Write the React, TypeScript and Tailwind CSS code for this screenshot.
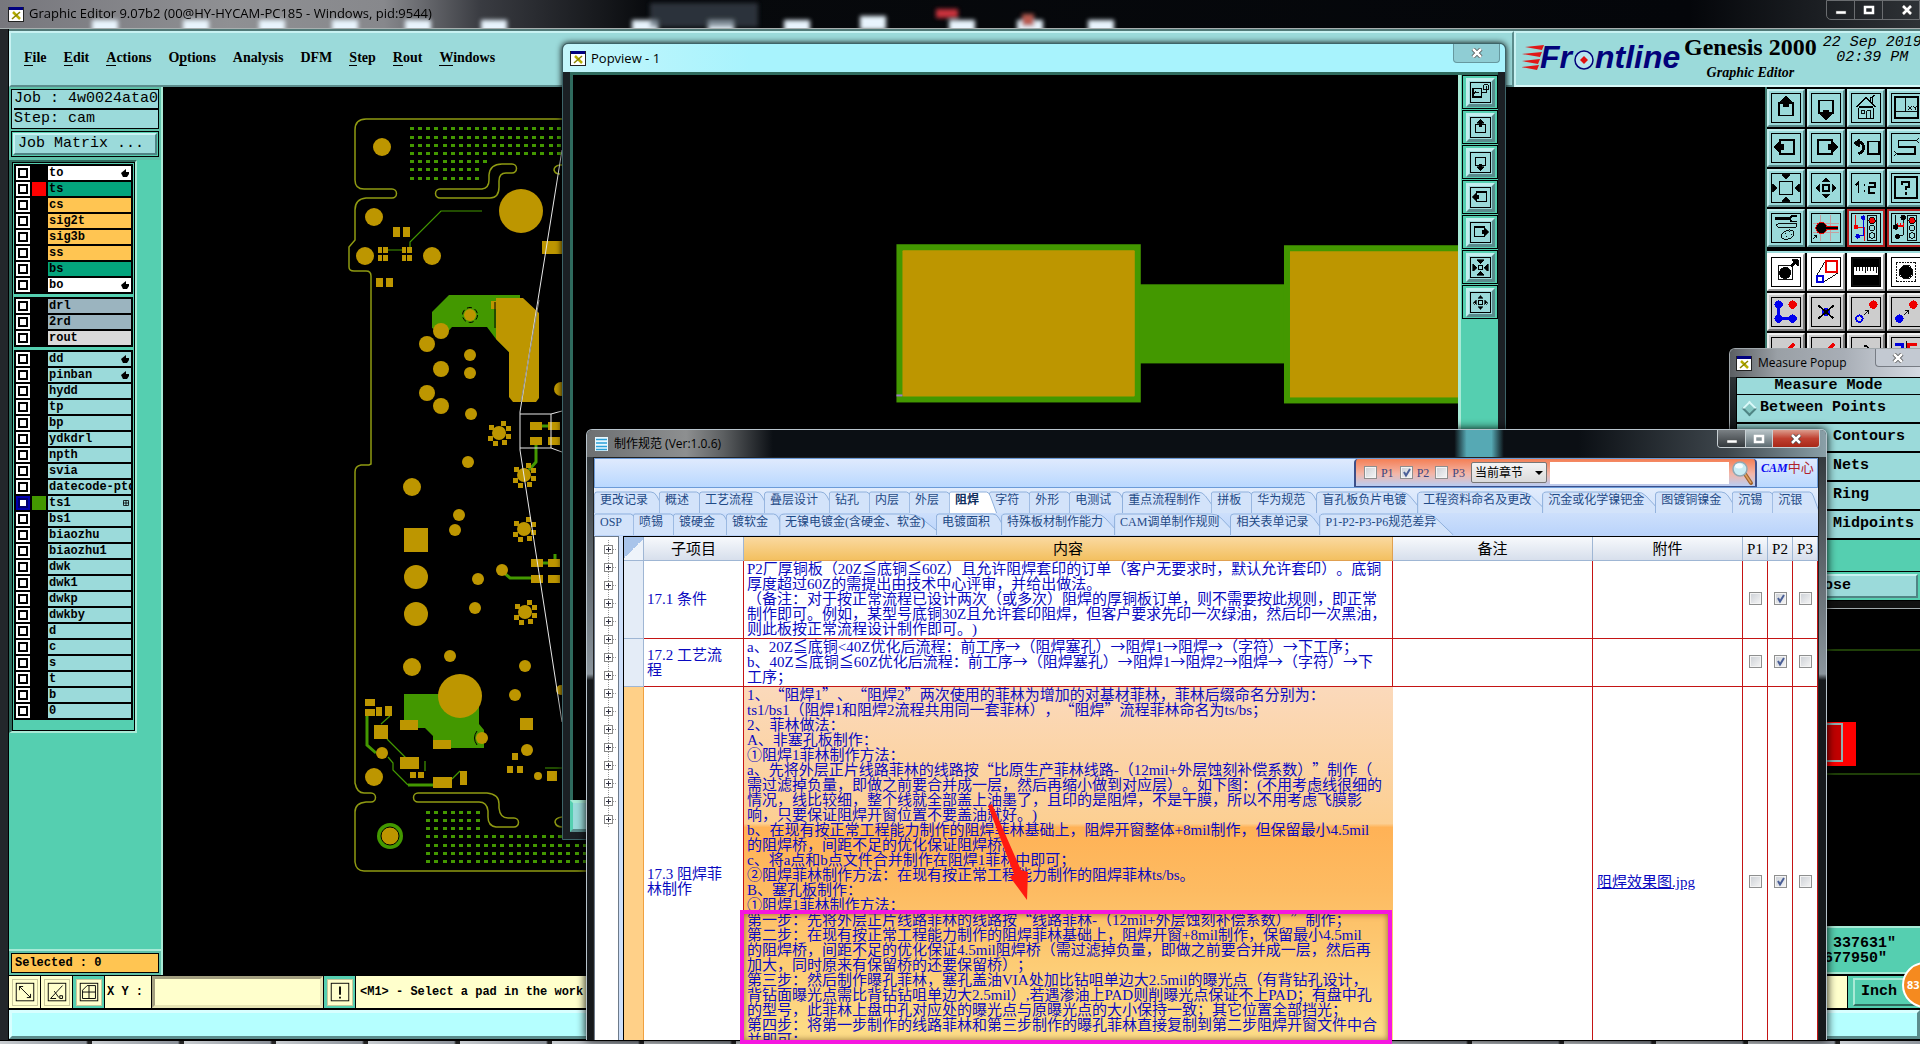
import type { ReactNode } from 'react';
import clsx from 'clsx';

type Layer = { name: string; bg: string; mark?: 'hand' | 'grid'; swatch?: string; active?: boolean };

const CYAN = 'bg-[#9bdada]';
const layer = (name: string, extra: Partial<Layer> = {}): Layer => ({ name, bg: CYAN, ...extra });

const layerGroups: Layer[][] = [
  [
    { name: 'to', bg: 'bg-white', mark: 'hand' },
    { name: 'ts', bg: 'bg-[#04a47d]', swatch: 'bg-[#ff0000]' },
    { name: 'cs', bg: 'bg-[#ffc552]' },
    { name: 'sig2t', bg: 'bg-[#ffc552]' },
    { name: 'sig3b', bg: 'bg-[#ffc552]' },
    { name: 'ss', bg: 'bg-[#ffc552]' },
    { name: 'bs', bg: 'bg-[#04a47d]' },
    { name: 'bo', bg: 'bg-white', mark: 'hand' },
  ],
  [
    { name: 'drl', bg: 'bg-[#9bb4bf]' },
    { name: '2rd', bg: 'bg-[#9bb4bf]' },
    { name: 'rout', bg: 'bg-[#dadada]' },
  ],
  [
    layer('dd', { mark: 'hand' }),
    layer('pinban', { mark: 'hand' }),
    layer('hydd'),
    layer('tp'),
    layer('bp'),
    layer('ydkdrl'),
    layer('npth'),
    layer('svia'),
    layer('datecode-ptd'),
    layer('ts1', { mark: 'grid', swatch: 'bg-[#439800]', active: true }),
    layer('bs1'),
    layer('biaozhu'),
    layer('biaozhu1'),
    layer('dwk'),
    layer('dwk1'),
    layer('dwkp'),
    layer('dwkby'),
    layer('d'),
    layer('c'),
    layer('s'),
    layer('t'),
    layer('b'),
    layer('0'),
  ],
];

// text before the mnemonic, the mnemonic itself, text after it
const menus = [
  ['', 'F', 'ile'],
  ['', 'E', 'dit'],
  ['', 'A', 'ctions'],
  ['O', 'p', 'tions'],
  ['Analysis', '', ''],
  ['DFM', '', ''],
  ['', 'S', 'tep'],
  ['', 'R', 'out'],
  ['', 'W', 'indows'],
];

const tabRows = [
  ['更改记录', '概述', '工艺流程', '叠层设计', '钻孔', '内层', '外层', '阻焊', '字符', '外形', '电测试', '重点流程制作', '拼板', '华为规范', '盲孔板负片电镀', '工程资料命名及更改', '沉金或化学镍钯金', '图镀铜镍金', '沉锡', '沉银'],
  ['OSP', '喷锡', '镀硬金', '镀软金', '无镍电镀金(含硬金、软金)', '电镀面积', '特殊板材制作能力', 'CAM调单制作规则', '相关表单记录', 'P1-P2-P3-P6规范差异'],
];

const specs = [
  {
    item: ['17.1 条件'],
    height: 'h-[78px]',
    lines: [
      'P2厂厚铜板（20Z≦底铜≦60Z）且允许阻焊套印的订单（客户无要求时，默认允许套印）。底铜',
      '厚度超过60Z的需提出由技术中心评审，并给出做法。',
      '（备注：对于按正常流程已设计两次（或多次）阻焊的厚铜板订单，则不需要按此规则，即正常',
      '制作即可。例如，某型号底铜30Z且允许套印阻焊，但客户要求先印一次绿油，然后印一次黑油，',
      '则此板按正常流程设计制作即可。)',
    ],
  },
  {
    item: ['17.2 工艺流', '程'],
    height: 'h-[48px]',
    lines: [
      'a、20Z≦底铜<40Z优化后流程：前工序→（阻焊塞孔）→阻焊1→阻焊→（字符）→下工序；',
      'b、40Z≦底铜≦60Z优化后流程：前工序→（阻焊塞孔）→阻焊1→阻焊2→阻焊→（字符）→下',
      '工序；',
    ],
  },
  {
    item: ['17.3 阻焊菲', '林制作'],
    height: 'h-[391px]',
    selected: true,
    file: '阻焊效果图.jpg',
    lines: [
      '1、“阻焊1”、“阻焊2”两次使用的菲林为增加的对基材菲林，菲林后缀命名分别为：',
      'ts1/bs1（阻焊1和阻焊2流程共用同一套菲林），“阻焊”流程菲林命名为ts/bs；',
      '2、菲林做法：',
      'A、非塞孔板制作：',
      '①阻焊1菲林制作方法：',
      'a、先将外层正片线路菲林的线路按“比原生产菲林线路-（12mil+外层蚀刻补偿系数）”制作（',
      '需过滤掉负量，即做之前要合并成一层，然后再缩小做到对应层）。如下图：(不用考虑线很细的',
      '情况，线比较细，整个线就全部盖上油墨了，且印的是阻焊，不是干膜，所以不用考虑飞膜影',
      '响，只要保证阻焊开窗位置不要盖油就好。)',
      'b、在现有按正常工程能力制作的阻焊菲林基础上，阻焊开窗整体+8mil制作，但保留最小4.5mil',
      '的阻焊桥，间距不足的优化保证阻焊桥。',
      'c、将a点和b点文件合并制作在阻焊1菲林中即可；',
      '②阻焊菲林制作方法：在现有按正常工程能力制作的阻焊菲林ts/bs。',
      'B、塞孔板制作：',
      '①阻焊1菲林制作方法：',
      '第一步：先将外层正片线路菲林的线路按“线路菲林-（12mil+外层蚀刻补偿系数）”制作；',
      '第二步：在现有按正常工程能力制作的阻焊菲林基础上，阻焊开窗+8mil制作，保留最小4.5mil',
      '的阻焊桥，间距不足的优化保证4.5mil阻焊桥（需过滤掉负量，即做之前要合并成一层，然后再',
      '加大，同时原来有保留桥的还要保留桥）；',
      '第三步：然后制作曝孔菲林，塞孔盖油VIA处加比钻咀单边大2.5mil的曝光点（有背钻孔设计，',
      '背钻面曝光点需比背钻钻咀单边大2.5mil）,若遇渗油上PAD则削曝光点保证不上PAD；有盘中孔',
      '的型号，此菲林上盘中孔对应处的曝光点与原曝光点的大小保持一致；其它位置全部挡光；',
      '第四步：将第一步制作的线路菲林和第三步制作的曝孔菲林直接复制到第二步阻焊开窗文件中合',
      '并即可；',
    ],
  },
];

const SONG = "font-['Liberation_Serif','Noto_Sans_CJK_SC',serif]";
const HEI = "font-['Noto_Sans_CJK_SC',sans-serif]";
const UI = "font-['Open_Sans','Noto_Sans_CJK_SC',sans-serif]";
const MONO = "font-['Liberation_Mono',monospace]";

/* ---------- icons ---------- */

const Tri = ({ x, y, dir, s = 4 }: { x: number; y: number; dir: 'u' | 'd' | 'l' | 'r'; s?: number }) => {
  const pts = {
    u: `${x - s},${y + s} ${x + s},${y + s} ${x},${y}`,
    d: `${x - s},${y - s} ${x + s},${y - s} ${x},${y}`,
    l: `${x + s},${y - s} ${x + s},${y + s} ${x},${y}`,
    r: `${x - s},${y - s} ${x - s},${y + s} ${x},${y}`,
  };
  return <polygon points={pts[dir]} fill="#000" />;
};

const icons: Record<string, ReactNode> = {
  up: (
    <>
      <rect x="7.5" y="10" width="15" height="13" strokeWidth="2" />
      <rect x="12" y="6" width="6" height="8" fill="#000" stroke="none" />
      <Tri x={15} y={2} dir="u" s={6} />
    </>
  ),
  down: (
    <>
      <rect x="7.5" y="7" width="15" height="13" strokeWidth="2" />
      <rect x="12" y="17" width="6" height="7" fill="#000" stroke="none" />
      <Tri x={15} y={28} dir="d" s={6} />
    </>
  ),
  left: (
    <>
      <rect x="9" y="6.500" width="15" height="15" strokeWidth="2" />
      <rect x="6" y="11" width="7" height="6" fill="#000" stroke="none" />
      <Tri x={2} y={14} dir="l" s={6} />
    </>
  ),
  right: (
    <>
      <rect x="6" y="6.500" width="15" height="15" strokeWidth="2" />
      <rect x="17" y="11" width="7" height="6" fill="#000" stroke="none" />
      <Tri x={28} y={14} dir="r" s={6} />
    </>
  ),
  home: (
    <>
      <path d="M5 14L15 4L25 14M7 14H23M7 15V26H23V15M20 9V4H22V11M22 3L24 1" strokeWidth="1.500" />
      <rect x="10" y="18" width="3" height="3" />
      <path d="M16 26V18H20V26" />
    </>
  ),
  xy: (
    <>
      <rect x="3" y="3" width="25" height="23" strokeWidth="2" />
      <path d="M14 3V19M3 19H28M17 13l4 4M21 13l-4 4M23 13l2 2l2-2M25 15v2" />
    </>
  ),
  undo: (
    <>
      <rect x="17" y="8" width="12" height="13" strokeWidth="2" />
      <path d="M8 9C14 9 14 20 7 21" strokeWidth="3" />
      <polygon points="2,10 8,5 8,14" fill="#000" />
    </>
  ),
  snake: (
    <>
      <path d="M27 7H7V14H25V21H5" strokeWidth="2" />
      <path d="M26 7l3-3M26 7l3 3M5 21l-3-3M5 21l-3 3" />
    </>
  ),
  fit: (
    <>
      <rect x="8" y="8" width="14" height="14" strokeWidth="2" />
      <Tri x={15} y={5} dir="d" />
      <Tri x={15} y={25} dir="u" />
      <Tri x={5} y={15} dir="r" />
      <Tri x={25} y={15} dir="l" />
    </>
  ),
  squeeze: (
    <>
      <rect x="12" y="12" width="6" height="6" strokeWidth="2" />
      <Tri x={15} y={9} dir="d" s={6} />
      <Tri x={15} y={21} dir="u" s={6} />
      <Tri x={9} y={15} dir="r" s={6} />
      <Tri x={21} y={15} dir="l" s={6} />
    </>
  ),
  zoomOut: (
    <>
      <rect x="11.500" y="11.500" width="7" height="7" strokeWidth="2" />
      <Tri x={15} y={4} dir="u" />
      <Tri x={15} y={26} dir="d" />
      <Tri x={4} y={15} dir="l" />
      <Tri x={26} y={15} dir="r" />
    </>
  ),
  ratio: <path d="M4 12L7 9V20M13 12h1M13 18h1M18 10H25V14H18V20H25" strokeWidth="2" />,
  help: (
    <>
      <rect x="3" y="3" width="24" height="23" strokeWidth="2" />
      <path d="M11 12V9H18V14H15V17M15 19v3" strokeWidth="2" />
    </>
  ),
  tools: (
    <>
      <path d="M3 5H19" strokeWidth="3" />
      <path d="M27 2H21L19 5L21 8H27" strokeWidth="2" />
      <path d="M4 12L7 10H26V14H7Z" />
      <path d="M12 20C16 16 24 16 23 21C23 26 16 28 13 27C9 26 9 22 12 20Z" />
      <path d="M14 21h1M18 19h1M20 22h1M15 24h1" />
    </>
  ),
  pad: (
    <>
      <path d="M1 10H29M1 20H29M9 1V29M20 1V29" stroke="#c99" />
      <circle cx="10" cy="15" r="6" fill="#000" stroke="#e00" />
      <path d="M15 15H28" stroke="#e00" strokeWidth="5" />
      <path d="M15 15H28" strokeWidth="2" />
      <path d="M1 27l4-4M2 23h3v3" />
    </>
  ),
  traffic: (
    <>
      <path d="M4 1V14L13 14V29" stroke="#e00" />
      <path d="M12 4V23H6" stroke="#00d" strokeWidth="1.500" />
      <circle cx="12" cy="4" r="2.500" fill="#00d" stroke="none" />
      <circle cx="4" cy="14" r="2.500" fill="#e00" stroke="none" />
      <circle cx="6" cy="24" r="2.500" fill="#00d" stroke="none" />
      <rect x="16.500" y="2" width="10" height="26" />
      <circle cx="21.500" cy="7" r="3.500" fill="#e00" />
      <circle cx="21.500" cy="15" r="3" />
      <circle cx="21.500" cy="23" r="3" />
    </>
  ),
  traffic2: (
    <>
      <path d="M4 1V14M12 4V23H6" />
      <path d="M6 14V10M9 14V10M12 14V10M6 13H13" stroke="#e00" strokeWidth="1.500" />
      <circle cx="12" cy="4" r="2.500" fill="#000" />
      <circle cx="4" cy="14" r="2.500" fill="#000" />
      <circle cx="6" cy="24" r="2.500" fill="#000" />
      <rect x="16.500" y="2" width="10" height="26" />
      <circle cx="21.500" cy="7" r="3.500" fill="#e00" />
      <circle cx="21.500" cy="15" r="3" />
      <circle cx="21.500" cy="23" r="3" />
    </>
  ),
  select: (
    <>
      <rect x="6.500" y="8.500" width="15" height="15" />
      <circle cx="14" cy="16" r="6" fill="#000" />
      <path d="M20 9L26 3" strokeWidth="3" />
      <polygon points="21,2 28,2 28,9" fill="#000" />
    </>
  ),
  resize: (
    <>
      <path d="M5 19L14 4M12 26L28 16" />
      <rect x="15" y="3" width="12" height="12" stroke="#e00" strokeWidth="2" />
      <rect x="5" y="19" width="7" height="7" stroke="#00d" strokeWidth="2" />
    </>
  ),
  ruler: (
    <>
      <rect x="1" y="1" width="28" height="28" fill="#000" />
      <rect x="2" y="10" width="26" height="8" fill="#fff" stroke="none" />
      <path d="M5 10v4M8 10v4M11 10v4M14 10v6M17 10v4M20 10v4M23 10v4M26 10v6" strokeWidth="1" />
    </>
  ),
  region: (
    <>
      <rect x="4.500" y="4.500" width="21" height="21" strokeDasharray="2 1" />
      <circle cx="15" cy="15" r="7" fill="#000" />
    </>
  ),
  net: (
    <>
      <path d="M7 7V22H22" stroke="#00e" strokeWidth="3" />
      <circle cx="7" cy="7" r="4.500" fill="#00e" stroke="none" />
      <circle cx="7" cy="22" r="4.500" fill="#00e" stroke="none" />
      <circle cx="22" cy="22" r="4.500" fill="#00e" stroke="none" />
      <circle cx="22" cy="7" r="4.500" fill="#e00" stroke="none" />
    </>
  ),
  remove: (
    <>
      <circle cx="15" cy="15" r="4.500" fill="#00e" stroke="none" />
      <path d="M7 8L23 22M23 8L7 22" strokeWidth="2" />
    </>
  ),
  move: (
    <>
      <circle cx="8" cy="22" r="3.500" stroke="#00e" strokeWidth="2" />
      <circle cx="23" cy="7" r="4.500" fill="#e00" stroke="none" />
      <path d="M13 18L18 13M14 13H18V17" />
    </>
  ),
  copy: (
    <>
      <circle cx="8" cy="22" r="4.500" fill="#00e" stroke="none" />
      <circle cx="23" cy="7" r="4.500" fill="#e00" stroke="none" />
      <path d="M13 18L18 13M14 13H18V17" />
    </>
  ),
  stroke: <path d="M24 6L10 20" stroke="#e00" strokeWidth="4" />,
  curve: <path d="M13 8Q20 9 18 18" strokeWidth="2" />,
  mirror: (
    <>
      <path d="M3 7H11V15" stroke="#00d" strokeWidth="3" />
      <path d="M15 3V27" />
      <path d="M27 7H18V15" stroke="#e00" strokeWidth="3" />
    </>
  ),
  popup: (
    <>
      <rect x="3" y="9" width="13" height="13" strokeWidth="2" />
      <path d="M13 15H7M9 12l-3 3l3 3M20 3h7v8h-7zM16 15H24V9M24 5v4" strokeWidth="1.500" />
    </>
  ),
};

const Icon = ({ name, className }: { name: string; className: string }) => (
  <svg viewBox="0 0 30 30" className={className} fill="none" stroke="#000" shapeRendering="crispEdges" aria-hidden="true">
    {icons[name]}
  </svg>
);

const toolRows: { tone: 'cyan' | 'white' | 'gray'; names: string[] }[] = [
  { tone: 'cyan', names: ['up', 'down', 'home', 'xy'] },
  { tone: 'cyan', names: ['left', 'right', 'undo', 'snake'] },
  { tone: 'cyan', names: ['fit', 'zoomOut', 'ratio', 'help'] },
  { tone: 'cyan', names: ['tools', 'pad', 'traffic', 'traffic2'] },
  { tone: 'white', names: ['select', 'resize', 'ruler', 'region'] },
  { tone: 'gray', names: ['net', 'remove', 'move', 'copy'] },
  { tone: 'gray', names: ['stroke', 'stroke', 'curve', 'mirror'] },
];

const tones = {
  cyan: 'bg-[#9bdada] border-t-[#c2eeee] border-l-[#c2eeee] border-b-[#5b8c8c] border-r-[#5b8c8c]',
  white: 'bg-white border-t-white border-l-white border-b-[#999] border-r-[#999]',
  gray: 'bg-[#cdcdcd] border-t-[#eee] border-l-[#eee] border-b-[#777] border-r-[#777]',
};

function ToolGrid() {
  return (
    <div className="absolute top-0 right-0 w-[155px] overflow-hidden border-l-2 border-[#3f7a70] bg-black pt-[2px]">
      {toolRows.map((row, i) => (
        <div key={i} className={clsx('flex w-max gap-[2px] pb-[2px]', i === 4 && 'mt-[2px] border-t-2 border-[#9bdada]')}>
          {row.names.map((name, j) => (
            <button
              key={j}
              aria-label={name}
              className={clsx('size-[38px] shrink-0 border-2 p-[2px]', name.startsWith('traffic') ? 'border-[#b32020] bg-[#9bdada]' : tones[row.tone])}
            >
              <Icon name={name} className="size-[30px] border border-black" />
            </button>
          ))}
        </div>
      ))}
    </div>
  );
}

const AppIcon = () => (
  <svg viewBox="0 0 16 15" className="h-[15px] w-4 shrink-0" aria-hidden="true">
    <rect width="16" height="15" fill="#222" />
    <rect x="1" y="1" width="14" height="13" fill="#fff" />
    <rect x="1" width="14" height="3" fill="#000080" />
    <path d="M5 5L12 12" stroke="#b5ad00" strokeWidth="2.500" />
    <path d="M12 5L4 12" stroke="#8a8400" strokeWidth="1.500" />
  </svg>
);

const WinMin = () => (
  <svg viewBox="0 0 12 10" className="h-[10px] w-3" aria-hidden="true">
    <rect x="1" y="6" width="10" height="3" fill="#fff" stroke="#555" strokeWidth=".5" />
  </svg>
);
const WinMax = () => (
  <svg viewBox="0 0 12 10" className="h-[10px] w-3" aria-hidden="true">
    <rect x="2" y="2" width="8" height="6" fill="none" stroke="#fff" strokeWidth="2.500" />
  </svg>
);
const WinClose = () => (
  <svg viewBox="0 0 12 10" className="h-[10px] w-3" aria-hidden="true">
    <path d="M2 1L10 9M10 1L2 9" stroke="#444" strokeWidth="4" />
    <path d="M2 1L10 9M10 1L2 9" stroke="#fff" strokeWidth="2.500" />
  </svg>
);

/* ---------- board drawing ---------- */

const GOLD = '#bd9600';
const GREEN = '#439800';

const holes: [number, number, number][] = [
  [382, 147, 9], [374, 217, 9], [521, 211, 22], [365, 256, 9], [432, 256, 9], [441, 331, 8], [427, 344, 8],
  [470, 315, 6], [470, 355, 6], [441, 369, 8], [470, 373, 6], [427, 393, 8], [441, 406, 8], [471, 414, 6],
  [468, 462, 6], [412, 487, 9], [459, 515, 6], [455, 530, 6], [416, 577, 12], [416, 614, 12], [478, 579, 6],
  [475, 608, 6], [502, 570, 6], [450, 656, 6], [412, 667, 9], [460, 696, 22], [525, 666, 6], [515, 695, 6],
  [382, 753, 6], [374, 777, 9], [482, 738, 6], [527, 750, 6], [538, 776, 4], [561, 389, 7], [561, 690, 5],
];

const pads: [number, number, number, number][] = [
  [393, 227, 7, 10], [403, 227, 7, 10], [378, 247, 4, 6], [383, 247, 5, 6], [378, 255, 4, 6], [383, 255, 5, 6],
  [402, 247, 4, 6], [407, 247, 5, 6], [402, 255, 4, 6], [407, 255, 5, 6], [376, 278, 7, 9], [386, 278, 7, 9],
  [542, 241, 20, 13], [404, 528, 24, 24], [530, 422, 12, 8], [548, 422, 12, 8], [530, 437, 12, 8], [548, 437, 12, 8],
  [531, 559, 12, 8], [548, 559, 12, 8], [531, 575, 12, 8], [548, 575, 12, 8], [520, 718, 13, 12],
  [400, 720, 18, 10], [433, 740, 18, 9], [374, 725, 14, 14], [400, 757, 19, 12], [433, 777, 19, 11],
  [365, 699, 10, 7], [365, 709, 10, 7], [376, 707, 6, 9], [385, 706, 7, 10], [547, 771, 10, 10],
  [512, 753, 6, 7], [507, 766, 6, 7], [517, 766, 6, 7], [460, 771, 7, 14], [410, 772, 6, 6], [418, 772, 6, 6],
];

const flowers: [number, number][] = [[499, 433], [524, 475], [524, 529], [525, 612]];
const petals: [number, number][] = [[4, -10], [9, -5], [9, 3], [5, 9], [-4, 10], [-9, 5], [-8, -6]];

const dotRows: [number, number, number, number][] = [
  [412, 128, 19, 8.15], [412, 137, 19, 8.15], [412, 145, 19, 8.15], [412, 153, 19, 8.15],
  [412, 161, 10, 8.15], [412, 169, 9, 8.15], [412, 178, 9, 8.15],
  [428, 812, 7, 8.25], [428, 820, 7, 8.25], [428, 828, 7, 8.25],
  [428, 836, 20, 8.25], [428, 845, 20, 8.25], [428, 853, 20, 8.25], [428, 861, 20, 8.25],
];

function Board() {
  return (
    <svg width="1757" height="888" viewBox="163 87 1757 888" className="block shrink-0" aria-hidden="true">
      <g fill="none" stroke="#8f9a12" strokeWidth="1.500">
        <path d="M590 119H366Q355 119 355 130V180Q355 189 364 189H392A4.500 4.500 0 0 1 392 198H366Q355 199 355 210V240L349 247V267Q349 271 354 271H366Q371 271 371 276V464L369 465H361Q355 466 355 472V783Q357 793 364 793H371A4.500 4.500 0 0 1 371 802H366Q355 803 355 812V862Q356 871 364 871H590" />
        <path d="M482 189Q489 188 489 180V175Q490 164 502 164H512A4.500 4.500 0 0 1 512 173H506Q499 173 499 181V187Q499 198 490 198H440A4.500 4.500 0 0 1 440 189Z" />
        <path d="M418 793H487Q499 794 499 804V808Q500 818 508 818H514A4.500 4.500 0 0 1 514 827H496Q488 826 488 817V811Q487 802 479 802H418A4.500 4.500 0 0 1 418 793Z" />
        <path d="M566 165H560Q554 166 554 170Q555 174 560 174M566 817H562Q555 818 555 822Q556 827 562 827" />
      </g>
      {dotRows.map(([x, y, n, step]) =>
        Array.from({ length: n }, (_, i) => (
          <rect key={`${y}-${i}`} x={Math.round(x + i * step) - 2} y={y - 1} width="4" height="3" fill={GREEN} />
        )),
      )}
      <g fill={GREEN}>
        <polygon points="432,312 449,295 520,295 520,360 509,352 496,339 487,327 452,327 445,335 432,328" />
        <polygon points="404,694 479,694 479,724 484,730 484,748 433,748 433,736 425,728 404,728" />
        <circle cx="390" cy="836" r="13" />
      </g>
      <g fill="none" stroke={GREEN} strokeWidth="3">
        <path d="M541 426H548M536 445V462L529 470M502 571L510 578H531M542 563H548M555 559V554M367 716V745L376 753M408 785H433" />
        <path d="M410 247V242L441 211H482M388 250H402M390 716L381 724M387 739L406 758M388 757L393 763V770L408 785M425 761V771M452 779L460 771M545 768H562" strokeWidth="1.200" />
      </g>
      <g fill={GOLD}>
        <polygon points="496,298 523,298 539,313 539,398 536,402 513,402 509,397 509,352 496,339" />
        {holes.map(([x, y, r]) => (
          <circle key={`${x}-${y}`} cx={x} cy={y} r={r} />
        ))}
        {pads.map(([x, y, w, h]) => (
          <rect key={`${x}-${y}`} x={x} y={y} width={w} height={h} />
        ))}
        <rect x="491" y="301" width="6" height="8" />
        {flowers.map(([x, y]) => (
          <g key={y}>
            <circle cx={x} cy={y} r="7" />
            {petals.map(([dx, dy]) => (
              <rect key={dx * 20 + dy} x={x + dx - 2} y={y + dy - 2} width="5" height="5" />
            ))}
          </g>
        ))}
      </g>
      <g fill="none" stroke="#000">
        <circle cx="470" cy="315" r="7.500" strokeDasharray="5 3" />
        <path d="M477 731Q472 738 477 745M495 302V328" />
      </g>
      <circle cx="390" cy="836" r="9" fill={GOLD} stroke="#000" />
      <path d="M562 150L520 412V450L562 722M520 414H551V448H520M551 414L562 411M551 448L562 452" fill="none" stroke="#e8e8e8" />
      <path d="M539 300L521 402" stroke="#8c8c8c" />
      <path d="M1820 650H1920M1820 774H1920" stroke="#3f7f10" />
      <rect x="1810" y="722" width="46" height="44" fill="#f00" />
      <rect x="1810" y="724" width="32" height="37" fill="#c00000" stroke="#8fb0b0" strokeWidth="2" />
    </svg>
  );
}

/* ---------- main window ---------- */

const reflections = [105, 196, 272, 345, 418, 494, 645, 721, 797, 873, 962, 1030, 1101];

function TitleBar() {
  return (
    <div className="relative flex h-[29px] shrink-0 items-center gap-[5px] border-b border-[#a8b0b0] bg-[linear-gradient(90deg,#77777d_0,#8f9093_12%,#87888c_20%,#3a3c42_25%,#07090c_34%,#04060a_88%,#2e3236_100%)] pl-2">
      <svg className="absolute inset-0 h-7 w-full" aria-hidden="true">
        <defs>
          <filter id="glass">
            <feGaussianBlur stdDeviation="2" />
          </filter>
        </defs>
        <g filter="url(#glass)">
          {reflections.map((x) => (
            <rect key={x} x={x - 13} y={x === 873 ? 16 : 20} width="26" height="14" fill="#e8f4fd" />
          ))}
          <rect x="650" y="3" width="108" height="24" fill="#42505c" opacity=".6" />
          <rect x="936" y="9" width="22" height="9" fill="#c8303c" />
          <rect x="1022" y="14" width="12" height="12" fill="#b85a50" />
        </g>
      </svg>
      <span className="relative">
        <AppIcon />
      </span>
      <span className={clsx(UI, 'relative text-[13px] text-black')}>Graphic Editor 9.07b2 (00@HY-HYCAM-PC185 - Windows, pid:9544)</span>
      <div className="absolute top-0 right-0 flex h-5 w-[94px] divide-x divide-[#6a6d70] overflow-hidden rounded-bl-[5px] border border-[#6a6d70]">
        <button aria-label="Minimize" className="flex w-[28px] shrink-0 items-center justify-center"><WinMin /></button>
        <button aria-label="Maximize" className="flex w-[28px] shrink-0 items-center justify-center"><WinMax /></button>
        <button aria-label="Close" className="flex w-[47px] shrink-0 items-center justify-center"><WinClose /></button>
      </div>
    </div>
  );
}

function Header() {
  return (
    <header className="flex h-[58px] shrink-0 border-t-2 border-[#527a78] bg-[#9bdada]">
      <nav className="flex flex-1 items-center gap-[17px] border-2 border-t-[#c8f2f2] border-r-[#5b8c8c] border-b-[#5b8c8c] border-l-[#c8f2f2] pb-[3px] pl-[13px]">
        {menus.map(([a, b, c]) => (
          <button key={a + b + c} className="font-['Liberation_Serif',serif] text-[14px] leading-[16px] font-bold whitespace-nowrap">
            {a}
            {b && <span className="border-b border-black">{b}</span>}
            {c}
          </button>
        ))}
      </nav>
      <div className="flex w-[406px] shrink-0 overflow-hidden border-t-2 border-b-2 border-l-2 border-t-[#c8f2f2] border-b-[#d8f8f8] border-l-[#c8f2f2] pl-[6px]">
        <svg viewBox="0 0 160 50" className="mt-px h-[50px] w-[160px] shrink-0" role="img" aria-label="Frontline">
          <g fill="#e01818">
            <polygon points="3,13 22,11 20,16" />
            <polygon points="0,20 20,18 18,23" />
            <polygon points="0,27 18,25 16,30" />
            <polygon points="-1,33 17,31 15,36" />
          </g>
          <g fill="#02027a" fontFamily="'Liberation Sans', sans-serif" fontSize="32" fontWeight="700" fontStyle="italic">
            <text x="18" y="34">Fr</text>
            <text x="73" y="34">ntline</text>
          </g>
          <circle cx="62" cy="26" r="9" fill="#b8e4ee" stroke="#02027a" strokeWidth="1.500" />
          <polygon points="62,22 66,26 62,30 58,26" fill="#e01010" />
        </svg>
        <div className="ml-[2px] flex flex-col items-center font-['Liberation_Serif',serif] font-bold whitespace-nowrap">
          <span className="text-[24px] leading-[28px]">Genesis 2000</span>
          <span className="text-[14px] leading-[24px] italic">Graphic Editor</span>
        </div>
        <div className={clsx(MONO, 'ml-[6px] flex flex-col items-center pt-[2px] text-[15px] leading-[15px] whitespace-nowrap italic')}>
          <span>22 Sep 2019</span>
          <span>02:39 PM</span>
        </div>
      </div>
    </header>
  );
}

function LayerRow({ item }: { item: Layer }) {
  return (
    <li className="flex h-4 items-start">
      <label className={clsx('flex size-[14px] shrink-0 items-center justify-center', item.active ? 'bg-[#0000b0]' : 'bg-white')}>
        <input type="checkbox" aria-label={item.name} className={clsx('size-[10px] appearance-none border-2 bg-white', item.active ? 'border-[#00006a]' : 'border-black')} />
      </label>
      <span className={clsx('ml-[2px] h-[14px] w-[14px] shrink-0', item.swatch)} />
      <span className={clsx('ml-[2px] flex h-[14px] flex-1 items-center justify-between overflow-hidden pr-[2px] pl-px text-[12px] leading-[14px] font-bold whitespace-nowrap', MONO, item.bg)}>
        {item.name}
        {item.mark === 'hand' && (
          <svg viewBox="0 0 8 8" className="size-2 shrink-0" aria-hidden="true">
            <path d="M0 4L5 0V3H8V5L6 8H2Z" />
          </svg>
        )}
        {item.mark === 'grid' && (
          <svg viewBox="0 0 6 6" className="size-[6px] shrink-0" fill="none" stroke="#000" aria-hidden="true">
            <path d="M.5 .5h5v5h-5zM3 0v6M0 3h6" strokeWidth=".8" />
          </svg>
        )}
      </span>
    </li>
  );
}

function Sidebar() {
  return (
    <aside className="flex w-[154px] shrink-0 flex-col border-r-2 border-[#a8ead6] bg-[#55cfb0]">
      <div className="bg-[#5fc0a8] p-[2px] pb-[3px]">
        <div className={clsx(MONO, 'divide-y-2 divide-black border border-black bg-[#9bdada] pl-[2px] text-[15px] leading-[18px] whitespace-nowrap')}>
          <div>Job : 4w0024ata0</div>
          <div>Step: cam</div>
        </div>
        <div className="mt-[2px] border border-black bg-[#55cfb0] p-px">
          <button className={clsx(MONO, 'block h-[22px] w-full border-2 border-t-[#c8f2f2] border-r-[#4f8484] border-b-[#4f8484] border-l-[#c8f2f2] bg-[#9bdada] pl-[3px] text-left text-[15px] leading-[18px] whitespace-nowrap')}>
            Job Matrix ...
          </button>
        </div>
      </div>
      <div className="w-[128px] border-2 border-t-[#2f6b5e] border-r-[#a8ead6] border-b-[#a8ead6] border-l-3 border-l-[#2f6b5e]">
        <div className="border border-black p-px pb-[10px]">
          {layerGroups.map((group, i) => (
            <ul key={i} className={clsx('bg-black px-[2px] pt-[2px]', i > 0 && 'mt-[3px]')}>
              {group.map((item) => (
                <LayerRow key={item.name} item={item} />
              ))}
            </ul>
          ))}
        </div>
      </div>
      <div className="mt-auto border-t-2 border-[#a8ead6] bg-[#5fc0a8] p-[2px]">
        <div className={clsx(MONO, 'border border-black bg-[#ffc552] pl-[3px] text-[12px] leading-[18px] font-bold')}>Selected : 0</div>
      </div>
    </aside>
  );
}

const StatusButton = ({ label, teal, children }: { label: string; teal?: boolean; children: ReactNode }) => (
  <button aria-label={label} className={clsx('flex w-[31px] shrink-0 items-center justify-center', teal ? 'bg-[#55cfb0]' : 'bg-[#ffffcc]')}>
    <svg viewBox="0 0 26 27" className="h-[27px] w-[26px] border border-[#c9c79c] bg-[#ffffcc]" fill="none" stroke="#000" aria-hidden="true">
      <rect x="3.500" y="3.500" width="19" height="19" />
      {children}
    </svg>
  </button>
);

function StatusBar() {
  return (
    <div className="flex h-[34px] shrink-0 gap-px border-y border-black bg-black">
      <StatusButton label="Measure"><path d="M7 7L19 19M7 11V7H11M15 19H19V15" /></StatusButton>
      <StatusButton label="Angle"><path d="M6 20L19 6M6 20H12M10 12L15 19M16 17h3v3h-3z" /></StatusButton>
      <StatusButton label="Grid" teal><path d="M6 20V11L11 6H20V20ZM13 6V20M6 13H20" /></StatusButton>
      <label htmlFor="xy" className={clsx(MONO, 'flex w-[46px] shrink-0 items-center bg-[#ffffcc] pl-[2px] text-[12px] font-bold whitespace-pre')}>
        X Y :
      </label>
      <input
        id="xy"
        defaultValue=""
        className="w-[171px] shrink-0 border-3 border-t-[#a39f80] border-r-[#e6e4b4] border-b-[#e6e4b4] border-l-[#a39f80] bg-[#ffffcc] px-1 outline-none"
      />
      <StatusButton label="Alert" teal><path d="M13 7V16M13 18V20" strokeWidth="2" /></StatusButton>
      <div className={clsx(MONO, 'flex flex-1 items-center bg-[#ffffcc] pl-[4px] text-[12px] font-bold')}>{'<M1> - Select a pad in the work'}</div>
      <div className="flex w-[72px] shrink-0 overflow-hidden bg-[#55cfb0] py-[2px] pl-[5px]">
        <button className={clsx(MONO, 'w-[90px] shrink-0 border-2 border-t-[#a8ead6] border-r-[#2f6b5e] border-b-[#2f6b5e] border-l-[#a8ead6] pl-[6px] text-left text-[15px] font-bold')}>
          Inch
        </button>
      </div>
    </div>
  );
}

/* ---------- popview ---------- */

function Popview() {
  return (
    <section className="absolute top-[43px] left-[562px] flex h-[797px] w-[944px] flex-col rounded-t-[6px] border border-[#3d6468] bg-[#1b2024] px-[7px] pb-[7px] shadow-[0_0_6px_#000]">
      <div className="-mx-[7px] flex h-[28px] shrink-0 items-center gap-[5px] rounded-t-[5px] bg-[linear-gradient(90deg,#c4f6fb,#a8f3fd_20%,#a8f3fd)] pl-[7px]">
        <AppIcon />
        <span className={clsx(UI, 'text-[13px] leading-[16px]')}>Popview - 1</span>
        <button aria-label="Close popview" className="mr-[5px] mb-auto ml-auto flex h-[19px] w-[47px] items-center justify-center rounded-b-[4px] border border-t-0 border-[#66989f] bg-[#8fcdd4]">
          <WinClose />
        </button>
      </div>
      <div className="flex min-h-0 flex-1 border-t-3 border-l-3 border-[#2f6b5e]">
        <svg viewBox="573 75 885 724" preserveAspectRatio="xMinYMin slice" className="min-w-0 flex-1 bg-black" aria-hidden="true">
          <g fill={GREEN}>
            <rect x="896" y="244" width="244" height="158" />
            <rect x="1139" y="284" width="145" height="79" />
            <rect x="1283" y="245" width="185" height="158" />
          </g>
          <rect x="902" y="250" width="232" height="146" rx="1" fill={GOLD} />
          <rect x="1289" y="251" width="180" height="146" fill={GOLD} />
          <rect x="896" y="394" width="6" height="2" fill="#9a7ac8" />
        </svg>
        <div className="w-[40px] shrink-0 border-l-3 border-[#a8ead6] bg-[#55cfb0] pl-px">
          {['popup', 'up', 'down', 'left', 'right', 'squeeze', 'zoomOut'].map((name) => (
            <button key={name} aria-label={name} className="mb-px flex h-[34px] w-[36px] items-center justify-center border border-black bg-[#55cfb0]">
              <span className="border-3 border-t-[#c2eeee] border-r-[#5b8c8c] border-b-[#5b8c8c] border-l-[#c2eeee] bg-[#9bdada] p-px">
                <Icon name={name} className="size-[21px] border border-black" />
              </span>
            </button>
          ))}
        </div>
      </div>
      <div className="h-[32px] shrink-0 border-3 border-t-[#a8ead6] border-r-[#5b8c8c] border-b-[#5b8c8c] border-l-[#55cfb0] bg-[#9bdada]" />
    </section>
  );
}

/* ---------- measure popup ---------- */

function MeasurePopup() {
  return (
    <section className="absolute top-[348px] right-0 w-[191px] overflow-hidden rounded-tl-[6px] border border-r-0 border-[#a0a8ac] bg-[linear-gradient(#3c4246,#14181b_30%,#111)] pb-[7px] pl-[6px]">
      <div className="-ml-[6px] flex h-[28px] items-center gap-[6px] bg-[linear-gradient(90deg,#5b5f63,#9aa0a6_25%,#a8aeb6_60%,#d5dae2)] pl-[6px]">
        <AppIcon />
        <span className={clsx(UI, 'text-[12px]')}>Measure Popup</span>
        <button aria-label="Close measure popup" className="mb-auto ml-auto flex h-[18px] w-[45px] items-center justify-center rounded-bl-[4px] border border-t-0 border-r-0 border-[#777c84] bg-[#c3c9d2]">
          <WinClose />
        </button>
      </div>
      <div className={clsx(MONO, 'border border-r-0 border-black bg-[#55cfb0] text-[15px] font-bold')}>
        <div className="border-b border-black bg-[#9bdada] text-center leading-[16px]">Measure Mode</div>
        <label className="flex h-[29px] items-center gap-[5px] border-b-2 border-black bg-[#9bdada] pl-[7px]">
          <input type="radio" name="mode" className="size-[11px] rotate-45 appearance-none border-2 border-t-[#d8f8f8] border-r-[#4f8484] border-b-[#4f8484] border-l-[#d8f8f8] bg-[#86c8c4]" />
          Between Points
        </label>
        {['Contours', 'Nets', 'Ring', 'Midpoints'].map((name) => (
          <label key={name} className="flex h-[29px] items-center border-b-2 border-black bg-[#9bdada] pl-[7px]">
            <input type="radio" name="mode" className="mr-[78px] size-[11px] rotate-45 appearance-none" />
            {name}
          </label>
        ))}
        <div className="mt-[31px] border-t border-black p-[2px]">
          <button className="block h-[24px] w-full border-2 border-t-[#c8f2f2] border-r-[#4f8484] border-b-[#4f8484] border-l-[#c8f2f2] bg-[#9bdada] text-center leading-[18px]">
            Close
          </button>
        </div>
      </div>
    </section>
  );
}

/* ---------- spec window ---------- */

function Check({ label, checked }: { label: string; checked?: boolean }) {
  return (
    <span className="relative inline-block size-[13px]">
      <input type="checkbox" aria-label={label} defaultChecked={checked} className="peer block size-[13px] appearance-none border border-[#8e8f8f] bg-[linear-gradient(135deg,#cbcfd5,#f6f6f6)] outline-1 -outline-offset-2 outline-[#f4f4f4]" />
      <svg viewBox="0 0 13 13" className="pointer-events-none absolute inset-0 hidden size-[13px] peer-checked:block" aria-hidden="true">
        <path d="M4 6L6 9.500L10 3" fill="none" stroke="#4a5f97" strokeWidth="2" />
      </svg>
    </span>
  );
}

// quotes and arrows take the full-width glyphs of the Chinese font
const Line = ({ text }: { text: string }) => (
  <div className="h-[15px] leading-[15px] whitespace-nowrap">
    {text.split(/([“”→]+)/).map((part, i) => (i % 2 ? <span key={i} className={clsx(HEI, 'leading-[0px]')}>{part}</span> : part))}
  </div>
);

function Tab({ name, active }: { name: string; active: boolean }) {
  return (
    <button
      className={clsx(
        'relative block h-[22px] shrink-0 pb-[4px] pl-[6px] text-[12px] leading-[18px] whitespace-nowrap',
        name.length > 2 ? 'pr-[11px]' : 'pr-[10px]',
        active ? 'z-10 font-bold text-[#0f2f5f]' : 'text-[#1f4a86]',
      )}
    >
      <svg className="absolute top-0 left-0 h-[22px] w-[calc(100%+8px)]" viewBox="0 0 100 22" preserveAspectRatio="none" aria-hidden="true">
        <path
          d="M.5 22V4Q.5 1 4 1H78Q83 1 86 5L99 22"
          fill={active ? '#fff' : '#d3e3fa'}
          stroke="#8fb0dc"
          vectorEffect="non-scaling-stroke"
        />
      </svg>
      <span className="relative">{name}</span>
    </button>
  );
}

function SearchBar() {
  return (
    <div className="flex h-[30px] items-stretch justify-end border border-[#6c9bd8] bg-[linear-gradient(#dfeafd,#b9d8ff)]">
      <form className="flex items-center rounded-t-[4px] border-l-2 border-r-2 border-b border-[#3b4f8a] bg-[linear-gradient(#f47f55,#f3b6a8_55%,#b9cdf2)] pl-[8px] text-[12px] text-[#3a4580]">
        {['P1', 'P2', 'P3'].map((p) => (
          <label key={p} className="mr-[6px] flex items-center gap-[4px]">
            <Check label={p} checked={p === 'P2'} />
            {p}
          </label>
        ))}
        <span className="relative">
          <select aria-label="范围" className="block h-[21px] w-[76px] appearance-none rounded-[2px] border border-[#777] bg-[linear-gradient(#f4f4f4,#dadada)] pl-[3px] text-[12px] text-black">
            <option>当前章节</option>
          </select>
          <svg viewBox="0 0 8 4" className="pointer-events-none absolute top-[9px] right-1 h-1 w-2" aria-hidden="true">
            <path d="M0 0H8L4 4Z" />
          </svg>
        </span>
        <input aria-label="搜索" className="ml-[3px] h-[22px] w-[179px] bg-white px-1 outline-none" />
        <button type="button" aria-label="查找" className="ml-[2px] w-[24px]">
          <svg viewBox="0 0 24 26" className="h-[26px] w-[24px]" aria-hidden="true">
            <path d="M14 14L20 23" stroke="#a0622a" strokeWidth="4" strokeLinecap="round" />
            <path d="M14 14L20 23" stroke="#e0a060" strokeWidth="1.500" />
            <circle cx="9" cy="9" r="7" fill="#c8ecf4" stroke="#90a8b4" strokeWidth="1.500" />
            <ellipse cx="8" cy="6" rx="4" ry="2.500" fill="#f4fdff" />
          </svg>
        </button>
      </form>
      <div className="flex w-[60px] items-start pl-[4px] leading-[18px]">
        <span className="text-[12px] font-bold text-[#0a0af0] italic">CAM</span>
        <span className="text-[13px] text-[#b0202c]">中心</span>
      </div>
    </div>
  );
}

const headCell = 'border-r border-b border-[#9fb6d4] bg-[linear-gradient(#f7f9fc,#d7dfec)] p-0 text-center font-normal';

function SpecTable() {
  return (
    <table className="w-full table-fixed border-separate border-spacing-0 border-t border-l border-black text-[15px]">
      <colgroup>
        <col className="w-[20px]" />
        <col className="w-[100px]" />
        <col className="w-[649px]" />
        <col />
        <col className="w-[150px]" />
        <col className="w-[25px]" />
        <col className="w-[25px]" />
        <col className="w-[25px]" />
      </colgroup>
      <thead>
        <tr className="h-[24px] leading-[20px]">
          <td className="border-r border-b border-[#9fb6d4] bg-[linear-gradient(135deg,#a9c4ea_50%,#eef3fa_50%)] p-0" />
          <th className={headCell}>子项目</th>
          <th className="border-r border-b border-[#e0a050] bg-[linear-gradient(#fad9a0,#f3c060)] p-0 text-center font-normal">内容</th>
          <th className={headCell}>备注</th>
          <th className={headCell}>附件</th>
          <th className={headCell}>P1</th>
          <th className={headCell}>P2</th>
          <th className={headCell}>P3</th>
        </tr>
      </thead>
      <tbody className="text-[#0a0ac0]">
        {specs.map((spec) => (
          <tr key={spec.item[0]} className={spec.height}>
            <td className={clsx('border-r border-b p-0', spec.selected ? 'border-[#f0a040] bg-[#ffd088]' : 'border-[#9fb6d4] bg-[#e4ecf7]')} />
            <td className="border-r border-b border-[#c41414] py-0 pr-0 pl-[3px] align-middle">
              {spec.item.map((t) => <Line key={t} text={t} />)}
            </td>
            <td
              className={clsx(
                'border-b border-[#c41414] py-0 pt-px pr-0 pl-[3px] align-top',
                spec.selected
                  ? 'bg-[linear-gradient(#fbd9bb_0%,#fccf92_35%,#ffb256_36%,#fdbb62_52%,#fde692_100%)]'
                  : 'border-r',
              )}
            >
              {spec.lines.map((t, i) => <Line key={i} text={t} />)}
            </td>
            <td className="border-r border-b border-[#c41414] p-0" />
            <td className="border-r border-b border-[#c41414] py-0 pr-0 pl-[4px] align-middle">
              {spec.file && <a href="#file" className="underline">{spec.file}</a>}
            </td>
            {['P1', 'P2', 'P3'].map((p) => (
              <td key={p} className="border-r border-b border-[#c41414] p-0 text-center align-middle leading-[13px]">
                <Check label={`${spec.item[0]} ${p}`} checked={p === 'P2'} />
              </td>
            ))}
          </tr>
        ))}
      </tbody>
    </table>
  );
}

function SpecWindow() {
  return (
    <section lang="zh-CN" className={clsx(SONG, 'absolute top-[429px] right-[93px] bottom-1 left-[586px] flex flex-col rounded-t-[6px] border border-b-0 border-[#b8c4cc] bg-[linear-gradient(#2a2f33,#8a949c_40%,#16191c_41%,#16191c)] pr-[7px] pl-[6px] shadow-[0_0_10px_#000] [text-spacing-trim:space-all]')}>
      <div className="relative -mr-[7px] -ml-[6px] flex h-[27px] shrink-0 items-center gap-[6px] rounded-t-[5px] bg-[linear-gradient(90deg,#6d7072_0,#8d8f90_8%,#5c5f61_11%,#0b0f14_15%,#0b0f14_70%,#56a9b4_71%,#56a9b4_73%,#0b0f14_74%,#0b0f14_80%,#3e464c_92%,#8aa0a8_100%)] pl-[8px]">
        <svg viewBox="0 0 13 14" className="h-[14px] w-[13px]" aria-hidden="true">
          <rect width="13" height="14" fill="#e8f8ff" />
          <path d="M1 2.500H12M1 6H12M1 9.500H12M1 12.500H12" stroke="#2aa0d8" strokeWidth="1.500" />
        </svg>
        <span className={clsx(UI, 'text-[12px] leading-[18px] text-black')}>制作规范 (Ver:1.0.6)</span>
        <div className="absolute top-0 right-[6px] flex h-[18px] overflow-hidden rounded-b-[4px] border border-t-0 border-[#c8d0d4]">
          <button aria-label="最小化" className="flex w-[28px] items-center justify-center border-r border-[#c8d0d4] bg-[linear-gradient(#7a8084,#33383c)]"><WinMin /></button>
          <button aria-label="最大化" className="flex w-[27px] items-center justify-center border-r border-[#c8d0d4] bg-[linear-gradient(#b8c4c8,#5c6a70)]"><WinMax /></button>
          <button aria-label="关闭" className="flex w-[46px] items-center justify-center bg-[linear-gradient(#dc9c8c,#c04030_50%,#a82818)]"><WinClose /></button>
        </div>
      </div>
      <div className="flex min-h-0 flex-1 flex-col border-x border-t border-[#222] bg-[#cfe0fa]">
        <SearchBar />
        <div className="bg-[linear-gradient(#e3edfc,#b9d3fb)] pt-[3px] pb-px">
          {tabRows.map((row, i) => (
            <div key={i} className="flex overflow-hidden">
              {row.map((name) => <Tab key={name} name={name} active={name === '阻焊'} />)}
            </div>
          ))}
        </div>
        <div className="flex min-h-0 flex-1">
          <ul className="w-[25px] shrink-0 border-t border-r border-l border-[#6d7a8a] bg-white pt-[3px]">
            {Array.from({ length: 16 }, (_, i) => (
              <li key={i} className="flex h-[18px] items-center pl-[9px]">
                <svg viewBox="0 0 13 18" className="h-[18px] w-[13px]" fill="none" aria-hidden="true" shapeRendering="crispEdges">
                  <path d="M4.500 0V18M9 9.500H13" stroke="#999" strokeDasharray="1 1" />
                  <rect x=".5" y="5.500" width="8" height="8" fill="#fff" stroke="#888" />
                  <path d="M2 9.500H7M4.500 7V12" stroke="#334" />
                </svg>
              </li>
            ))}
          </ul>
          <div className="ml-[4px] min-w-0 flex-1 overflow-hidden bg-white">
            <SpecTable />
          </div>
        </div>
      </div>
    </section>
  );
}

export default function App() {
  return (
    <div className="relative flex h-screen flex-col overflow-hidden bg-black text-black">
      <TitleBar />
      <div className="flex min-h-0 flex-1 flex-col border-l-8 border-[#23272b] pl-px">
        <Header />
        <div className="relative flex min-h-0 flex-1">
          <Sidebar />
          <div className="flex min-w-0 flex-1 overflow-hidden bg-black">
            <Board />
          </div>
          <ToolGrid />
          <div className={clsx(MONO, 'absolute right-0 bottom-px w-[100px] border-y-2 border-[#a8ead6] bg-[#55cfb0] pt-[8px] pb-[6px] pl-1 text-[15px] leading-[15px] font-bold')}>
            <div className="pl-[9px]">337631"</div>
            <div>677950"</div>
          </div>
        </div>
        <StatusBar />
        <div className="my-px h-[29px] shrink-0 border-3 border-t-[#d8ffff] border-r-[#5b8c8c] border-b-[#5b8c8c] border-l-[#d8ffff] bg-[#b5ffff]" />
      </div>
      <div className="h-1 shrink-0 border-t border-black bg-[repeating-linear-gradient(90deg,#c8ccd0_0,#8a9098_86px,#222_88px,#222_92px)]" />

      <Popview />
      <MeasurePopup />
      <SpecWindow />

      <div className={clsx(UI, 'absolute -right-[28px] bottom-[36px] flex size-[46px] items-center rounded-full border-2 border-white bg-[#f58a1f] pl-[3px] text-[11px] font-bold text-white')}>83</div>
      <svg className="pointer-events-none absolute top-[800px] left-[980px] h-[105px] w-[60px]" viewBox="980 800 60 105" aria-hidden="true">
        <path d="M988 806L992 804L1021 870L1028 872L1027 900L1010 877L1014 874Z" fill="#ff1a10" />
      </svg>
      <div className="pointer-events-none absolute top-[910px] bottom-0 left-[740px] w-[652px] border-4 border-[#f516e0] shadow-[inset_0_0_6px_rgba(80,40,0,.6)]" />
    </div>
  );
}
